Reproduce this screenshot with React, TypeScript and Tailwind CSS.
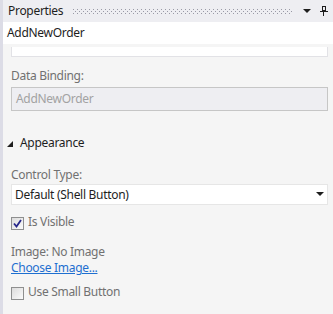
export default function App() {
  return (
    <div className="flex w-[333px] h-[314px] overflow-hidden bg-[#f5f5f5] font-['Noto_Sans',sans-serif] text-[12px] leading-4 tracking-[-0.3px] text-[#717171]">
      <div className="w-[3px] shrink-0 bg-[#dcdce6]" />
      <div className="flex flex-1 flex-col min-w-0">
        {/* title bar */}
        <div className="flex h-[22px] items-center bg-[#eeeef2] pl-[5px] pr-[5px]">
          <span className="text-[#1e1e1e]">Properties</span>
          <svg className="ml-[10px] mr-[10px] h-[5px] flex-1" preserveAspectRatio="none">
            <defs>
              <pattern id="grip" width="4" height="4" patternUnits="userSpaceOnUse">
                <rect x="0" y="0" width="1" height="1" fill="#9a9aa6" />
                <rect x="2" y="2" width="1" height="1" fill="#9a9aa6" />
              </pattern>
            </defs>
            <rect width="100%" height="100%" fill="url(#grip)" />
          </svg>
          <svg width="8" height="5" viewBox="0 0 8 5" className="mr-[9px]">
            <polygon points="0,0 8,0 4,4" fill="#1e1e1e" />
          </svg>
          <svg width="8" height="10" viewBox="0 0 8 10">
            <rect x="2.5" y="0.5" width="3" height="4" fill="none" stroke="#1e1e1e" />
            <rect x="0" y="5" width="8" height="1" fill="#1e1e1e" />
            <rect x="3" y="6" width="1" height="4" fill="#1e1e1e" />
          </svg>
        </div>

        {/* name box */}
        <div className="flex h-[22px] items-center bg-white pl-[4px] text-[#1e1e1e]">AddNewOrder</div>

        <div className="flex flex-col pl-[8px] pr-[5px]">
          <div className="mt-[3px] h-[10px] border border-t-0 border-[#e2e2e6] bg-white" />

          <div className="mt-[11px]">Data Binding:</div>
          <div className="mt-[3px] flex h-[24px] items-center border border-[#c6c6c6] bg-[#eeeef2] pl-[4px] text-[#a2a2a2]">
            AddNewOrder
          </div>

          <div className="-ml-[4px] mt-[24px] flex items-center text-[#1e1e1e]">
            <svg width="6" height="6" viewBox="0 0 6 6" className="mr-[7px] mt-[1px]">
              <polygon points="6,0 6,6 0,6" fill="#1e1e1e" />
            </svg>
            Appearance
          </div>

          <div className="mt-[16px]">Control Type:</div>
          <div className="mt-[1px] flex h-[21px] items-center justify-between border border-[#e6e6e6] bg-white pl-[3px] pr-[3px] text-[#1e1e1e]">
            <span>Default (Shell Button)</span>
            <svg width="8" height="5" viewBox="0 0 8 5">
              <polygon points="0,0 8,0 4,4" fill="#1e1e1e" />
            </svg>
          </div>

          <label className="mt-[9px] flex items-start">
            <span className="mt-[3px] mr-[4px] flex h-[13px] w-[13px] items-center justify-center border border-[#8e8f8f] bg-gradient-to-br from-[#dcdcdc] to-[#fbfbfb]">
              <svg width="9" height="9" viewBox="0 0 9 9">
                <path d="M1 4.5 L3.5 7.5 L8 1" fill="none" stroke="#26268a" strokeWidth="1.8" />
              </svg>
            </span>
            Is Visible
          </label>

          <div className="mt-[14px]">Image: No Image</div>
          <div className="text-[#1e6fd0] underline">Choose Image...</div>

          <label className="mt-[8px] flex items-start">
            <span className="mt-[3px] mr-[4px] h-[13px] w-[13px] border border-[#8e8f8f] bg-gradient-to-br from-[#dcdcdc] to-[#fbfbfb]" />
            Use Small Button
          </label>
        </div>
      </div>
    </div>
  );
}
